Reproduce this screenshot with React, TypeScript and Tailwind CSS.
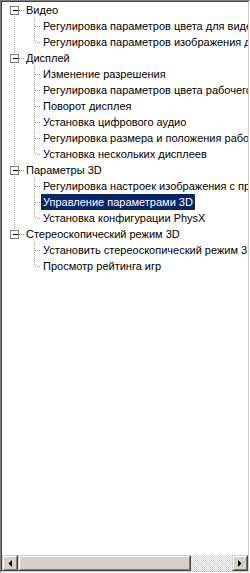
type Node = { label: string; children?: Node[]; selected?: boolean };

const tree: Node[] = [
  {
    label: "Видео",
    children: [
      { label: "Регулировка параметров цвета для видео" },
      { label: "Регулировка параметров изображения для видео" },
    ],
  },
  {
    label: "Дисплей",
    children: [
      { label: "Изменение разрешения" },
      { label: "Регулировка параметров цвета рабочего стола" },
      { label: "Поворот дисплея" },
      { label: "Установка цифрового аудио" },
      { label: "Регулировка размера и положения рабочего стола" },
      { label: "Установка нескольких дисплеев" },
    ],
  },
  {
    label: "Параметры 3D",
    children: [
      { label: "Регулировка настроек изображения с просмотром" },
      { label: "Управление параметрами 3D", selected: true },
      { label: "Установка конфигурации PhysX" },
    ],
  },
  {
    label: "Стереоскопический режим 3D",
    children: [
      { label: "Установить стереоскопический режим 3D" },
      { label: "Просмотр рейтинга игр" },
    ],
  },
];

type Row = { node: Node; level: number; last: boolean; first: boolean; trail: boolean[] };

const flatten = (nodes: Node[], level: number, trail: boolean[]): Row[] =>
  nodes.flatMap((node, i) => {
    const last = i === nodes.length - 1;
    const row: Row = { node, level, last, first: level === 0 && i === 0, trail };
    return [row, ...(node.children ? flatten(node.children, level + 1, [...trail, !last]) : [])];
  });

const LINE = "#a0a0a0";
const CELL = 20;

const Connector = ({ row }: { row: Row }) => {
  const w = (row.level + 1) * CELL - (row.level > 0 ? 3 : 0);
  const cx = row.level * CELL + 10.5;
  return (
    <svg width={w} height={16} className="shrink-0" shapeRendering="crispEdges">
      {row.trail.map((cont, i) =>
        cont ? (
          <line key={i} x1={i * CELL + 10.5} y1={0} x2={i * CELL + 10.5} y2={16} stroke={LINE} strokeDasharray="1 1" />
        ) : null
      )}
      <line x1={cx} y1={row.first ? 8 : 0} x2={cx} y2={row.last ? 8 : 16} stroke={LINE} strokeDasharray="1 1" />
      <line x1={cx} y1={8.5} x2={w} y2={8.5} stroke={LINE} strokeDasharray="1 1" />
      {row.node.children && (
        <g>
          <rect x={cx - 4} y={4.5} width={8} height={8} fill="#fff" stroke="#808080" />
          <line x1={cx - 2} y1={8.5} x2={cx + 3} y2={8.5} stroke="#000" />
        </g>
      )}
    </svg>
  );
};

const ArrowButton = ({ dir }: { dir: "left" | "right" }) => (
  <div className="w-[16px] h-[16px] shrink-0 bg-[#d4d0c8] border border-t-[#d4d0c8] border-l-[#d4d0c8] border-b-[#404040] border-r-[#404040] flex">
    <div className="flex-1 flex items-center justify-center border border-t-white border-l-white border-b-[#808080] border-r-[#808080]">
      <svg width="4" height="7" viewBox="0 0 4 7">
        {dir === "left" ? <path d="M4 0V7L0.5 3.5Z" fill="#000" /> : <path d="M0 0V7L3.5 3.5Z" fill="#000" />}
      </svg>
    </div>
  </div>
);

export default function App() {
  const rows = flatten(tree, 0, []);
  return (
    <div className="w-[250px] h-[573px] bg-white border border-t-[#808080] border-l-[#808080] border-b-white border-r-white font-['Liberation_Sans',Arial,sans-serif] text-[11px] text-black">
      <div className="h-full flex flex-col border border-t-[#404040] border-l-[#404040] border-b-[#d4d0c8] border-r-[#d4d0c8]">
        <div className="flex-1 overflow-hidden pl-[2px]">
          {rows.map((row, i) => (
            <div key={i} className="flex h-[16px] items-center whitespace-nowrap">
              <Connector row={row} />
              <span
                className={
                  row.node.selected
                    ? "h-[16px] leading-[16px] px-[2px] bg-[#0a246a] text-white"
                    : "h-[16px] leading-[16px] px-[2px]"
                }
              >
                {row.node.label}
              </span>
            </div>
          ))}
        </div>
        <div className="h-[16px] flex shrink-0">
          <ArrowButton dir="left" />
          <div className="w-[173px] h-[16px] bg-[#d4d0c8] border border-t-[#d4d0c8] border-l-[#d4d0c8] border-b-[#404040] border-r-[#404040] flex">
            <div className="flex-1 border border-t-white border-l-white border-b-[#808080] border-r-[#808080]" />
          </div>
          <div className="flex-1 bg-[repeating-conic-gradient(#d4d0c8_0_25%,#ffffff_0_50%)] bg-[length:2px_2px]" />
          <ArrowButton dir="right" />
        </div>
      </div>
    </div>
  );
}
